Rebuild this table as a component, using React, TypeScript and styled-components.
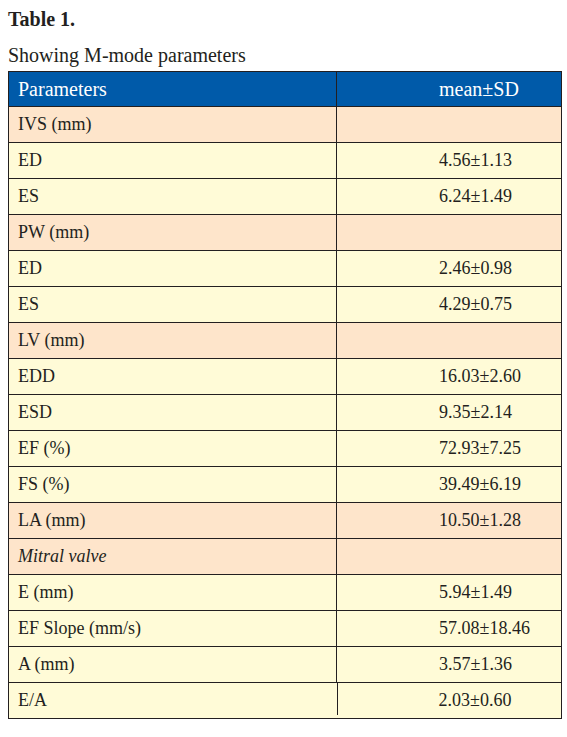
import React from "react";
import styled, { createGlobalStyle } from "styled-components";

const Global = createGlobalStyle`
  html, body { margin: 0; padding: 0; background: #ffffff; }
  body { font-family: "Liberation Serif", "Times New Roman", serif; color: #231f20; }
`;

const Page = styled.div`
  padding: 8px 7px 0 8px;
  width: 552px;
`;

const Title = styled.div`
  font-size: 20px;
  font-weight: bold;
  line-height: 22px;
  color: #231f20;
`;

const Caption = styled.div`
  margin-top: 14px;
  font-size: 20px;
  line-height: 22px;
  color: #231f20;
`;

const Table = styled.table`
  margin-top: 5px;
  width: 553px;
  border-collapse: collapse;
  table-layout: fixed;
  border: 1px solid #231f20;
`;

const HeadCell = styled.th<{ $value?: boolean }>`
  background: #005aa9;
  color: #ffffff;
  font-weight: normal;
  font-size: 20px;
  text-align: left;
  height: 35px;
  padding: 0 0 0 ${(p) => (p.$value ? "102px" : "9px")};
  border: 1px solid #231f20;
  box-sizing: border-box;
`;

const Cell = styled.td<{
  $tone: "group" | "item";
  $value?: boolean;
  $italic?: boolean;
  $last?: boolean;
}>`
  background: ${(p) => (p.$tone === "group" ? "#fee5cb" : "#fffbd7")};
  color: #231f20;
  font-size: 18px;
  font-style: ${(p) => (p.$italic ? "italic" : "normal")};
  height: 35px;
  padding: 0 0 0 ${(p) => (p.$value ? "102px" : "9px")};
  border: 1px solid #231f20;
  white-space: nowrap;
  ${(p) =>
    p.$last && !p.$value
      ? "border-right: none;"
      : ""}
  ${(p) =>
    p.$last && p.$value
      ? `border-left: none;
         background: linear-gradient(#231f20, #231f20) no-repeat 0 0 / 1px calc(100% - 3px), #fffbd7;`
      : ""}
`;

type Row = { label: string; value?: string; group?: boolean; italic?: boolean };

const rows: Row[] = [
  { label: "IVS (mm)", group: true },
  { label: "ED", value: "4.56±1.13" },
  { label: "ES", value: "6.24±1.49" },
  { label: "PW (mm)", group: true },
  { label: "ED", value: "2.46±0.98" },
  { label: "ES", value: "4.29±0.75" },
  { label: "LV (mm)", group: true },
  { label: "EDD", value: "16.03±2.60" },
  { label: "ESD", value: "9.35±2.14" },
  { label: "EF (%)", value: "72.93±7.25" },
  { label: "FS (%)", value: "39.49±6.19" },
  { label: "LA (mm)", value: "10.50±1.28", group: true },
  { label: "Mitral valve", group: true, italic: true },
  { label: "E (mm)", value: "5.94±1.49" },
  { label: "EF Slope (mm/s)", value: "57.08±18.46" },
  { label: "A (mm)", value: "3.57±1.36" },
  { label: "E/A", value: "2.03±0.60" },
];

export default function App() {
  return (
    <>
      <Global />
      <Page>
        <Title>Table 1.</Title>
        <Caption>Showing M-mode parameters</Caption>
        <Table>
          <colgroup>
            <col style={{ width: 328 }} />
            <col style={{ width: 225 }} />
          </colgroup>
          <thead>
            <tr>
              <HeadCell>Parameters</HeadCell>
              <HeadCell $value>mean±SD</HeadCell>
            </tr>
          </thead>
          <tbody>
            {rows.map((r, i) => {
              const tone = r.group ? "group" : "item";
              const last = i === rows.length - 1;
              return (
                <tr key={i}>
                  <Cell $tone={tone} $italic={r.italic} $last={last}>
                    {r.label}
                  </Cell>
                  <Cell $tone={tone} $value $last={last}>
                    {r.value ?? ""}
                  </Cell>
                </tr>
              );
            })}
          </tbody>
        </Table>
      </Page>
    </>
  );
}
